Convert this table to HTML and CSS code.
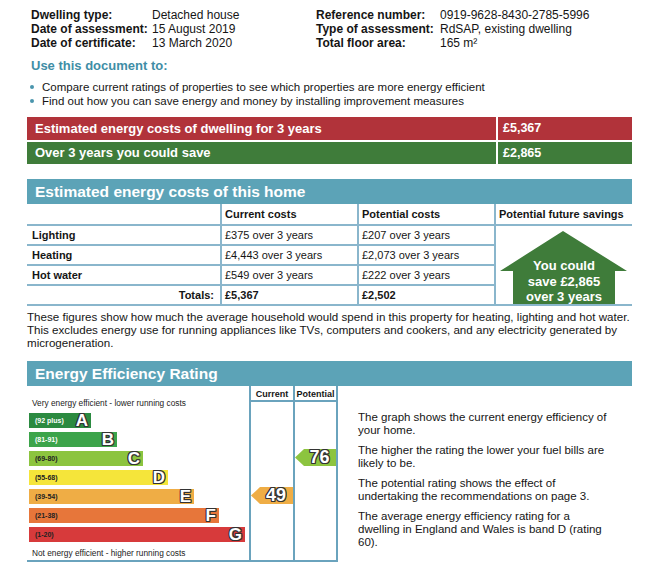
FILE: index.html
```html
<!DOCTYPE html>
<html lang="en">
<head>
<meta charset="utf-8">
<title>Energy Performance Certificate</title>
<link rel="stylesheet" href="styles.css">
</head>
<body>
<div class="page">
  <div class="info">
    <div class="info-col left">
      <span class="lbl">Dwelling type:</span><span>Detached house</span>
      <span class="lbl">Date of assessment:</span><span>15 August 2019</span>
      <span class="lbl">Date of certificate:</span><span>13 March 2020</span>
    </div>
    <div class="info-col right">
      <span class="lbl">Reference number:</span><span>0919-9628-8430-2785-5996</span>
      <span class="lbl">Type of assessment:</span><span>RdSAP, existing dwelling</span>
      <span class="lbl">Total floor area:</span><span>165 m²</span>
    </div>
  </div>

  <h2 class="use">Use this document to:</h2>
  <ul class="bullets">
    <li><span class="dot"></span>Compare current ratings of properties to see which properties are more energy efficient</li>
    <li><span class="dot"></span>Find out how you can save energy and money by installing improvement measures</li>
  </ul>

  <div class="bar red"><span>Estimated energy costs of dwelling for 3 years</span><span class="amt">£5,367</span></div>
  <div class="bar green"><span>Over 3 years you could save</span><span class="amt">£2,865</span></div>

  <div class="head">Estimated energy costs of this home</div>
  <div class="costs">
    <div></div>
    <div class="bl th">Current costs</div>
    <div class="bl th">Potential costs</div>
    <div class="bl th">Potential future savings</div>

    <div class="th name">Lighting</div>
    <div class="bl">£375 over 3 years</div>
    <div class="bl">£207 over 3 years</div>
    <div class="bl save">
      <div class="house">You could<br>save £2,865<br>over 3 years</div>
    </div>

    <div class="th name">Heating</div>
    <div class="bl">£4,443 over 3 years</div>
    <div class="bl">£2,073 over 3 years</div>

    <div class="th name">Hot water</div>
    <div class="bl">£549 over 3 years</div>
    <div class="bl">£222 over 3 years</div>

    <div class="th total">Totals:</div>
    <div class="bl th">£5,367</div>
    <div class="bl th">£2,502</div>
  </div>

  <p class="note">These figures show how much the average household would spend in this property for heating, lighting and hot water. This excludes energy use for running appliances like TVs, computers and cookers, and any electricity generated by microgeneration.</p>

  <div class="head head2">Energy Efficiency Rating</div>
  <div class="rating">
    <div class="chart">
      <div class="col bands">
        <div class="cap top">Very energy efficient - lower running costs</div>
        <div class="band a"><span class="rng">(92 plus)</span><span class="ltr">A</span></div>
        <div class="band b"><span class="rng">(81-91)</span><span class="ltr">B</span></div>
        <div class="band c"><span class="rng">(69-80)</span><span class="ltr">C</span></div>
        <div class="band d"><span class="rng">(55-68)</span><span class="ltr">D</span></div>
        <div class="band e"><span class="rng">(39-54)</span><span class="ltr">E</span></div>
        <div class="band f"><span class="rng">(21-38)</span><span class="ltr">F</span></div>
        <div class="band g"><span class="rng">(1-20)</span><span class="ltr">G</span></div>
        <div class="cap bottom">Not energy efficient - higher running costs</div>
      </div>
      <div class="col cur">
        <div class="ch">Current</div>
        <div class="arrow e-arrow">49</div>
      </div>
      <div class="col pot">
        <div class="ch">Potential</div>
        <div class="arrow c-arrow">76</div>
      </div>
    </div>
    <div class="explain">
      <p>The graph shows the current energy efficiency of your home.</p>
      <p>The higher the rating the lower your fuel bills are likely to be.</p>
      <p>The potential rating shows the effect of undertaking the recommendations on page 3.</p>
      <p>The average energy efficiency rating for a dwelling in England and Wales is band D (rating 60).</p>
    </div>
  </div>
</div>
</body>
</html>
```
FILE: styles.css
```css
* { box-sizing: border-box; margin: 0; padding: 0; }

body {
  font-family: "Liberation Sans", Arial, sans-serif;
  color: #151515;
  background: #fff;
}

.page {
  width: 605px;
  margin-left: 27px;
  padding-top: 8px;
}

/* header info */
.info {
  display: grid;
  grid-template-columns: 285px 1fr;
  padding-left: 4px;
  font-size: 12px;
  line-height: 14px;
}
.info-col { display: grid; }
.info-col.left { grid-template-columns: 121px 1fr; }
.info-col.right { grid-template-columns: 124px 1fr; }
.lbl { font-weight: bold; }

.use {
  margin-top: 8px;
  padding-left: 4px;
  font-size: 13px;
  line-height: 16px;
  font-weight: bold;
  color: #3f8ea6;
}

.bullets {
  list-style: none;
  margin-top: 6px;
  font-size: 11.5px;
  line-height: 14px;
}
.bullets li {
  display: flex;
  align-items: center;
  padding-left: 3px;
}
.dot {
  width: 4px;
  height: 4px;
  border-radius: 50%;
  background: #4a95ad;
  margin-right: 8px;
  flex: none;
}

/* summary bars */
.bar {
  display: grid;
  grid-template-columns: 469px 1fr;
  column-gap: 2px;
  margin-top: 9px;
  height: 23px;
  line-height: 23px;
  color: #fff;
  font-weight: bold;
  font-size: 13px;
}
.bar span { padding-left: 8px; }
.bar .amt { padding-left: 5px; font-size: 12.5px; }
.red span { background: #b1333a; }
.green { margin-top: 2px; height: 22px; line-height: 22px; }
.green span { background: #3f7c3a; }

/* section headings */
.head {
  margin-top: 15px;
  height: 25px;
  line-height: 25px;
  padding-left: 8px;
  background: #5ca3b7;
  color: #fff;
  font-weight: bold;
  font-size: 15.5px;
}
.head2 { margin-top: 12px; height: 25px; line-height: 25px; }

/* costs table */
.costs {
  display: grid;
  grid-template-columns: 193px 137px 137px 138px;
  grid-template-rows: 22px repeat(4, 20px);
  font-size: 11px;
}
.costs > div {
  border-bottom: 2px solid #8ab6cc;
  display: flex;
  align-items: center;
  padding-left: 3px;
}
.costs > .bl { border-left: 2px solid #8ab6cc; }
.costs .th { font-weight: bold; }
.costs .name { padding-left: 5px; }
.costs .total { justify-content: flex-end; padding-right: 6px; }
.costs .save {
  grid-column: 4;
  grid-row: 2 / span 4;
  padding: 0;
  align-items: stretch;
}
.house {
  width: 100%;
  background: #3f7c3a;
  clip-path: polygon(67px 5px, 131px 45px, 119px 45px, 119px 100%, 17px 100%, 17px 45px, 4px 45px);
  color: #fff;
  font-weight: bold;
  font-size: 13px;
  line-height: 15.5px;
  text-align: center;
  padding-top: 32px;
}

.note {
  margin-top: 4px;
  font-size: 11.6px;
  line-height: 13px;
}

/* rating chart */
.rating { display: flex; }
.chart {
  display: flex;
  border-bottom: 2px solid #6aa3bd;
}
.col {
  display: grid;
  grid-template-rows: 16px 11px repeat(7, 19px) 14px;
}
.bands { width: 222px; }
.cur { width: 44px; border-left: 2px solid #6aa3bd; }
.pot { width: 45px; border-left: 2px solid #6aa3bd; border-right: 2px solid #6aa3bd; }

.ch {
  grid-row: 1;
  border-bottom: 2px solid #6aa3bd;
  font-size: 9px;
  font-weight: bold;
  text-align: center;
  padding-top: 3px;
  line-height: 10px;
}

.cap {
  font-size: 8.3px;
  padding-left: 5px;
  color: #222;
}
.cap.top {
  grid-row: 1 / 3;
  display: flex;
  align-items: flex-end;
  padding-bottom: 5px;
}
.cap.bottom { line-height: 14px; }

.band {
  height: 15px;
  margin-left: 2px;
  display: flex;
  justify-content: space-between;
  align-items: center;
  padding: 0 3px 0 6px;
}
.rng { font-size: 7px; font-weight: bold; color: #222; }
.ltr {
  font-size: 17px;
  font-weight: bold;
  line-height: 15px;
  color: #fff;
  text-shadow: -1px 0 #333, 1px 0 #333, 0 -1px #333, 0 1px #333,
               -1px -1px #333, 1px 1px #333, -1px 1px #333, 1px -1px #333;
}
.band.a { width: 62px; background: #2b8a40; }
.band.b { width: 88px; background: #3ca44a; }
.band.c { width: 114px; background: #8cc43f; }
.band.d { width: 139px; background: #f5e53a; }
.band.e { width: 165px; background: #efad45; }
.band.f { width: 190px; background: #e7763a; }
.band.g { width: 216px; background: #d73a3b; }
.band.a .rng, .band.b .rng { color: #fff; }

.arrow {
  height: 17px;
  margin-top: -2px;
  clip-path: polygon(0 50%, 9px 0, 100% 0, 100% 100%, 9px 100%);
  padding-left: 8px;
  text-align: center;
  font-size: 18px;
  font-weight: bold;
  line-height: 17px;
  color: #fff;
  text-shadow: -1px 0 #333, 1px 0 #333, 0 -1px #333, 0 1px #333,
               -1px -1px #333, 1px 1px #333, -1px 1px #333, 1px -1px #333;
}
.e-arrow { grid-row: 7; background: #efad45; }
.c-arrow { grid-row: 5; background: #8cc43f; }

.explain {
  margin-left: 20px;
  padding-top: 25px;
  width: 250px;
  font-size: 11.5px;
  line-height: 13px;
}
.explain p + p { margin-top: 7px; }
```
